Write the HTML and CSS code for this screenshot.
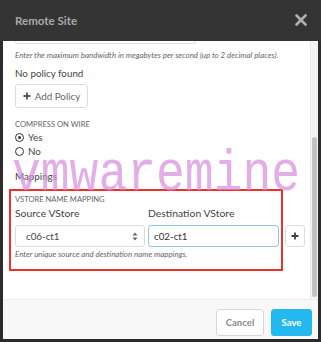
FILE: index.html
```html
<!DOCTYPE html>
<html lang="en">

<head>
    <meta charset="UTF-8">
    <title>Remote Site</title>
    <link rel="stylesheet" href="styles.css">
</head>

<body>
    <div class="modal">
        <!-- Header -->
        <div class="modal-header">
            <span class="modal-title">Remote Site</span>
            <svg class="close" width="12" height="12" viewBox="0 0 12 12">
                <path d="M1.5 1.5 L10.5 10.5 M10.5 1.5 L1.5 10.5" stroke="#b0b0b0" stroke-width="2.6" stroke-linecap="round"/>
            </svg>
        </div>

        <!-- Body -->
        <div class="modal-body">
            <div class="content">
                <div class="bw-input"></div>
                <p class="help">Enter the maximum bandwidth in megabytes per second (up to 2 decimal places).</p>

                <p class="text">No policy found</p>
                <button class="btn-policy">
                    <svg width="8" height="8" viewBox="0 0 8 8">
                        <path d="M4 0.5 V7.5 M0.5 4 H7.5" stroke="#555" stroke-width="1.8"/>
                    </svg>
                    Add Policy
                </button>

                <p class="label compress">COMPRESS ON WIRE</p>
                <div class="radio"><span class="dot checked"></span>Yes</div>
                <div class="radio"><span class="dot"></span>No</div>

                <p class="text mappings">Mappings</p>

                <div class="mapping-box">
                    <p class="label">VSTORE NAME MAPPING</p>
                    <div class="mapping-heads">
                        <span class="head">Source VStore</span>
                        <span class="head">Destination VStore</span>
                    </div>
                    <div class="mapping-row">
                        <div class="select">
                            <span>c06-ct1</span>
                            <svg width="6" height="9" viewBox="0 0 6 9">
                                <path d="M0.5 3.5 L3 0.5 L5.5 3.5 Z M0.5 5.5 L3 8.5 L5.5 5.5 Z" fill="#666"/>
                            </svg>
                        </div>
                        <div class="input">c02-ct1</div>
                        <button class="btn-add">
                            <svg width="8" height="8" viewBox="0 0 8 8">
                                <path d="M4 0.5 V7.5 M0.5 4 H7.5" stroke="#444" stroke-width="1.8"/>
                            </svg>
                        </button>
                    </div>
                    <p class="help">Enter unique source and destination name mappings.</p>
                </div>
            </div>
            <div class="scrollbar">
                <div class="thumb"></div>
            </div>
        </div>

        <!-- Footer -->
        <div class="modal-footer">
            <button class="btn-cancel">Cancel</button>
            <button class="btn-save">Save</button>
        </div>

        <div class="watermark">vmwaremine</div>
    </div>
</body>

</html>
```

FILE: styles.css
```css
* {
    margin: 0;
    padding: 0;
    box-sizing: border-box;
}

body {
    font-family: Lato, "Open Sans", Arial, sans-serif;
    background-color: #2c2c2c;
    width: 321px;
    height: 342px;
    overflow: hidden;
}

.modal {
    position: relative;
    width: 321px;
    height: 342px;
    padding: 0 3px 3px 3px;
    background-color: #2c2c2c;
    display: flex;
    flex-direction: column;
}

/* Header */
.modal-header {
    height: 41px;
    margin: 0 -3px;
    padding: 0 14px 0 15px;
    background-color: #343434;
    display: flex;
    justify-content: space-between;
    align-items: center;
}

.modal-title {
    color: #a9a9a9;
    font-size: 11.5px;
    font-weight: bold;
}

.close {
    margin-top: -1px;
}

/* Body */
.modal-body {
    height: 258px;
    background-color: white;
    display: flex;
}

.content {
    flex: 1;
    padding-left: 12px;
    overflow: hidden;
}

.bw-input {
    width: 181px;
    height: 3px;
    border: 1px solid #ddd;
    border-top: none;
    border-radius: 0 0 3px 3px;
}

.help {
    margin-top: 5px;
    font-size: 7.9px;
    line-height: 12px;
    font-style: italic;
    color: #666;
    white-space: nowrap;
}

.text {
    margin-top: 5px;
    font-size: 9.8px;
    line-height: 14px;
    color: #444;
}

.btn-policy {
    margin-top: 4px;
    height: 24px;
    width: 73px;
    font-family: inherit;
    font-size: 9.8px;
    color: #666;
    background-color: white;
    border: 1px solid #ddd;
    border-radius: 3px;
    display: flex;
    align-items: center;
    justify-content: center;
    gap: 4px;
}

.label {
    font-size: 7.6px;
    line-height: 12px;
    color: #666;
}

.compress {
    margin-top: 10px;
}

.radio {
    display: flex;
    align-items: center;
    gap: 4px;
    font-size: 9.8px;
    line-height: 14px;
    color: #444;
}

.radio:first-of-type {
    margin-top: 2px;
}

.dot {
    width: 9px;
    height: 9px;
    border: 1.8px solid #333;
    border-radius: 50%;
    display: flex;
    align-items: center;
    justify-content: center;
}

.dot.checked::after {
    content: "";
    width: 3px;
    height: 3px;
    border-radius: 50%;
    background-color: #333;
}

.mappings {
    margin-top: 11px;
}

/* Mapping box */
.mapping-box {
    margin: 6px 0 0 -6px;
    width: 274px;
    height: 82px;
    border: 2px solid #f0302a;
    padding: 2px 0 0 4px;
}

.mapping-heads {
    margin-top: 1px;
    display: flex;
}

.head {
    font-size: 10.4px;
    line-height: 14px;
    color: #444;
}

.head:first-child {
    width: 133px;
}

.mapping-row {
    margin-top: 5px;
    display: flex;
    width: 290px;
}

.select {
    width: 130px;
    height: 22px;
    border: 1px solid #ddd;
    border-radius: 3px;
    padding: 0 6px 0 10px;
    display: flex;
    align-items: center;
    justify-content: space-between;
    font-size: 9.8px;
    color: #444;
}

.input {
    margin-left: 3px;
    width: 131px;
    height: 22px;
    border: 1px solid #8cc6ef;
    border-radius: 3px;
    padding-left: 5px;
    display: flex;
    align-items: center;
    font-size: 9.8px;
    color: #333;
}

.btn-add {
    margin-left: 6px;
    width: 20px;
    height: 22px;
    background-color: white;
    border: 1px solid #ddd;
    border-radius: 3px;
    display: flex;
    align-items: center;
    justify-content: center;
}

.mapping-box .help {
    margin-top: 1px;
}

/* Scrollbar */
.scrollbar {
    width: 8px;
    background-color: #f3f3f3;
    border-left: 1px solid #e8e8e8;
    padding-top: 96px;
    display: flex;
    justify-content: center;
}

.thumb {
    width: 5px;
    height: 160px;
    border-radius: 3px;
    background-color: #c2c2c2;
}

/* Footer */
.modal-footer {
    height: 40px;
    background-color: #f8f8f8;
    border-top: 1px solid #ececec;
    padding: 9px 6px 0 0;
    display: flex;
    justify-content: flex-end;
    align-items: flex-start;
    gap: 7px;
}

.modal-footer button {
    height: 27px;
    font-family: inherit;
    font-size: 9.6px;
    font-weight: bold;
    border-radius: 3px;
}

.btn-cancel {
    width: 48px;
    color: #8a8a8a;
    background-color: white;
    border: 1px solid #d8d8d8;
}

.btn-save {
    width: 41px;
    color: white;
    background-color: #23b8ee;
    border: 1px solid #23b8ee;
}

/* Watermark overlay */
.watermark {
    position: absolute;
    left: 12px;
    top: 146px;
    font-family: "Liberation Mono", monospace;
    font-size: 48px;
    line-height: 48px;
    color: rgba(215, 140, 222, 0.7);
    transform: scaleY(1.18);
    transform-origin: left top;
    pointer-events: none;
}
```
